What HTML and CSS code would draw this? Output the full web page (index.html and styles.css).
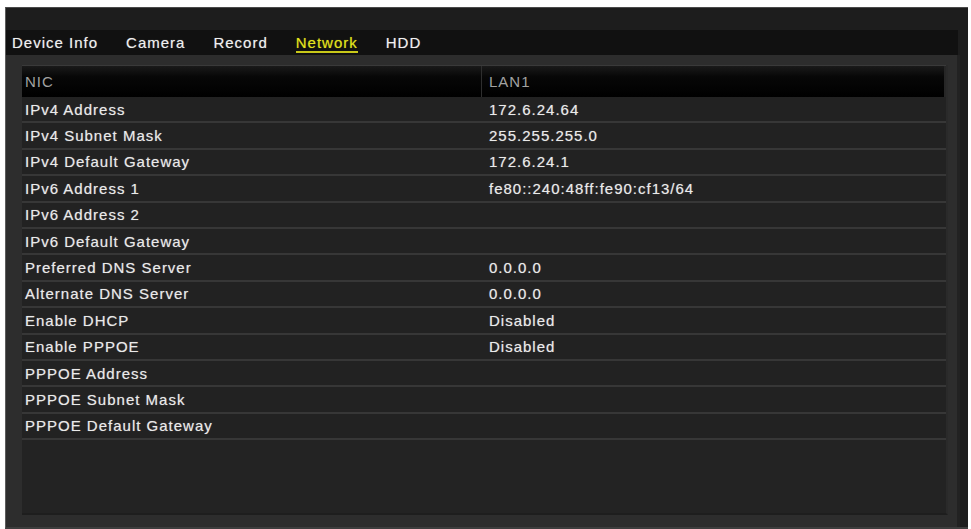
FILE: index.html
```html
<!DOCTYPE html>
<html>
<head>
<meta charset="utf-8">
<link rel="stylesheet" href="styles.css">
</head>
<body>
<div class="window">
  <div class="tabs">
    <span class="tab">Device Info</span>
    <span class="tab">Camera</span>
    <span class="tab">Record</span>
    <span class="tab active">Network</span>
    <span class="tab">HDD</span>
  </div>
  <div class="content">
    <div class="table">
      <div class="row head"><div class="cell label">NIC</div><div class="cell value">LAN1</div></div>
      <div class="row"><div class="cell label">IPv4 Address</div><div class="cell value">172.6.24.64</div></div>
      <div class="row"><div class="cell label">IPv4 Subnet Mask</div><div class="cell value">255.255.255.0</div></div>
      <div class="row"><div class="cell label">IPv4 Default Gateway</div><div class="cell value">172.6.24.1</div></div>
      <div class="row"><div class="cell label">IPv6 Address 1</div><div class="cell value">fe80::240:48ff:fe90:cf13/64</div></div>
      <div class="row"><div class="cell label">IPv6 Address 2</div><div class="cell value"></div></div>
      <div class="row"><div class="cell label">IPv6 Default Gateway</div><div class="cell value"></div></div>
      <div class="row"><div class="cell label">Preferred DNS Server</div><div class="cell value">0.0.0.0</div></div>
      <div class="row"><div class="cell label">Alternate DNS Server</div><div class="cell value">0.0.0.0</div></div>
      <div class="row"><div class="cell label">Enable DHCP</div><div class="cell value">Disabled</div></div>
      <div class="row"><div class="cell label">Enable PPPOE</div><div class="cell value">Disabled</div></div>
      <div class="row"><div class="cell label">PPPOE Address</div><div class="cell value"></div></div>
      <div class="row"><div class="cell label">PPPOE Subnet Mask</div><div class="cell value"></div></div>
      <div class="row"><div class="cell label">PPPOE Default Gateway</div><div class="cell value"></div></div>
      <div class="filler"></div>
    </div>
  </div>
</div>
</body>
</html>
```
FILE: styles.css
```css
html, body {
  margin: 0;
  padding: 0;
  background: #ffffff;
}
body {
  font-family: "Liberation Sans", Arial, sans-serif;
  font-size: 15px;
  letter-spacing: 1px;
}
.window {
  margin: 7px 0 0 5px;
  width: 963px;
  height: 522px;
  box-sizing: border-box;
  border-left: 1px solid #5c5c5c;
  border-top: 1px solid #4a4a4a;
  border-bottom: 2px solid #3e3e3e;
  background: #1d1d1d;
  padding-right: 8px;
  display: flex;
  flex-direction: column;
}
.tabs {
  margin-top: 22px;
  margin-right: 2px;
  height: 25px;
  background: #111111;
  display: flex;
  align-items: center;
  gap: 28px;
  padding-left: 6px;
  color: #f0f0f0;
  text-shadow: 0 0 1px rgba(255,255,255,0.45);
}
.tab {
  line-height: 18px;
  padding-top: 1px;
}
.tab.active {
  color: #e4e41c;
  border-bottom: 2px solid #c9c919;
  line-height: 16px;
  padding-top: 3px;
  text-shadow: 0 0 1px rgba(228,228,28,0.5);
}
.content {
  flex: 1;
  background: #2d2d2d;
  padding: 10px 9px 12px 16px;
  display: flex;
  border-right: 3px solid #222;
}
.table {
  flex: 1;
  display: flex;
  flex-direction: column;
  background: #232323;
  border-right: 2px solid #2a2a2a;
  border-bottom: 2px solid #1e1e1e;
}
.row {
  display: grid;
  grid-template-columns: 460px 1fr;
  height: 26.4px;
  box-sizing: border-box;
  border-bottom: 2px solid #373737;
  background: #222222;
  color: #eaeaea;
  text-shadow: 0 0 1px rgba(255,255,255,0.45);
}
.row.head {
  height: 32px;
  border-bottom: none;
  border-top: 1px solid #3a3a3a;
  background: linear-gradient(#1a1a1a 0%, #070707 35%, #000000 100%);
  color: #a2a2a2;
  text-shadow: none;
}
.cell {
  display: flex;
  align-items: center;
  white-space: nowrap;
}
.label {
  padding-left: 3px;
}
.value {
  padding-left: 7px;
}
.head .label {
  border-right: 1px solid #2e2e2e;
}
.head .value {
  border-right: 2px solid #262626;
}
.filler {
  flex: 1;
}
```
